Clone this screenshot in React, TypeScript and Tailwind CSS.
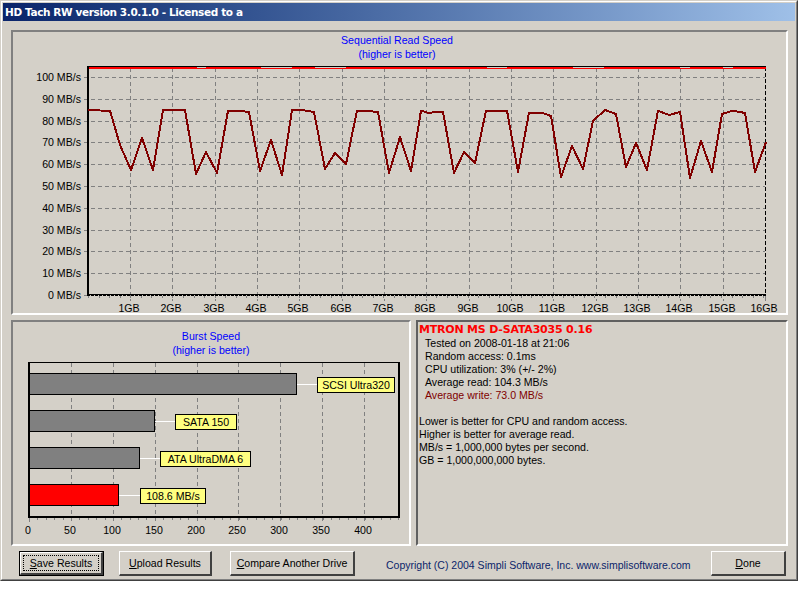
import React from 'react';

const readLine = [
  [88, 110], [100, 110.5], [110, 110.7], [120, 145], [131, 170], [142, 138], [153, 170], [163, 110], [185, 110],
  [196, 174], [206, 152], [217, 173], [228, 110.7], [238, 110.7], [249, 112], [260, 171], [271, 140], [282, 175],
  [292, 110], [302, 110], [314, 112], [325, 169], [335, 153], [346, 164], [357, 110.7], [368, 111], [378, 112],
  [389, 173], [400, 137], [411, 171], [421, 110.7], [428, 112.7], [443, 112], [454, 173], [464, 152], [475, 163],
  [486, 110.7], [507, 110.7], [518, 172], [529, 112.7], [542, 112.7], [551, 116], [561, 177], [572, 146], [583, 169],
  [593, 121], [605, 110], [616, 114], [626, 167], [636, 143], [647, 170], [658, 110.7], [669, 115], [680, 112],
  [690, 178], [701, 141], [712, 172], [722, 114], [733, 110.7], [745, 113], [755, 172], [766, 142],
];

const thickRuns = [
  [88, 197], [206, 261], [292, 315], [346, 487], [507, 573], [604, 680], [690, 723], [733, 766],
];

const mbLabels = [100, 90, 80, 70, 60, 50, 40, 30, 20, 10, 0];
const mbY = [77, 99, 121, 142, 164, 186, 208, 230, 251, 273, 295];
const gbX = [130, 172, 215, 257, 299, 342, 384, 426, 469, 511, 553, 596, 638, 680, 723, 765];

const burstTicks = [0, 50, 100, 150, 200, 250, 300, 350, 400];
const burstX = [29, 71, 113, 155, 197, 238, 280, 322, 364];

const bars = [
  { y: 373, end: 297, fill: '#808080', label: 'SCSI Ultra320', lx: 317, lw: 78 },
  { y: 410, end: 155, fill: '#808080', label: 'SATA 150', lx: 175, lw: 62 },
  { y: 447, end: 140, fill: '#808080', label: 'ATA UltraDMA 6', lx: 160, lw: 91 },
  { y: 484, end: 119, fill: '#ff0000', label: '108.6 MB/s', lx: 140, lw: 66 },
];

const sans = "font-['Liberation_Sans',Arial,sans-serif]";

function SequentialChart() {
  const minor = [];
  for (let x = 88; x < 766; x += 10.55) minor.push(Math.round(x) + 0.5);
  return (
    <svg width={773} height={252} viewBox="13 61 773 252" className="block">
      {mbY.slice(0, 10).map((y) => (
        <line key={y} x1={84} x2={765} y1={y + 0.5} y2={y + 0.5} stroke="#808080" strokeDasharray="4 3" shapeRendering="crispEdges" />
      ))}
      {gbX.slice(0, 15).map((x) => (
        <line key={x} x1={x + 0.5} x2={x + 0.5} y1={68} y2={301} stroke="#808080" strokeDasharray="4 3" shapeRendering="crispEdges" />
      ))}
      {minor.map((x) => (
        <line key={x} x1={x} x2={x} y1={296} y2={298} stroke="#808080" shapeRendering="crispEdges" />
      ))}
      <line x1={84} x2={88} y1={295.5} y2={295.5} stroke="#808080" shapeRendering="crispEdges" />
      <line x1={765.5} x2={765.5} y1={296} y2={301} stroke="#808080" shapeRendering="crispEdges" />

      <line x1={87} x2={766} y1={66.5} y2={66.5} stroke="#000" shapeRendering="crispEdges" />
      <rect x={87} y={66} width={2} height={230} fill="#000" shapeRendering="crispEdges" />
      <line x1={87} x2={766} y1={294.5} y2={294.5} stroke="#000" shapeRendering="crispEdges" />
      <line x1={87} x2={766} y1={295.5} y2={295.5} stroke="#000" strokeDasharray="3 1" shapeRendering="crispEdges" />
      <line x1={765.5} x2={765.5} y1={67} y2={295} stroke="#000" strokeDasharray="4 2" shapeRendering="crispEdges" />

      <rect x={89} y={68} width={677} height={1} fill="#ff0000" shapeRendering="crispEdges" />
      {thickRuns.map(([a, b]) => (
        <rect key={a} x={Math.max(a, 89)} y={67} width={b - Math.max(a, 89)} height={1} fill="#ff0000" shapeRendering="crispEdges" />
      ))}
      <polyline
        points={readLine.map((p) => p.join(',')).join(' ')}
        fill="none"
        stroke="#800000"
        strokeWidth={2}
        strokeLinejoin="round"
        shapeRendering="crispEdges"
      />

      {mbLabels.map((v, i) => (
        <text key={v} x={81} y={mbY[i] + 4} textAnchor="end" className={`${sans} text-[10.6px] fill-black`}>
          {v} MB/s
        </text>
      ))}
      {gbX.map((x, i) => (
        <text key={x} x={x - 1} y={312} textAnchor="middle" className={`${sans} text-[10.6px] fill-black`}>
          {i + 1}GB
        </text>
      ))}
    </svg>
  );
}

function BurstChart() {
  const minor = [];
  for (let x = 29; x < 399; x += 8.39) minor.push(Math.round(x) + 0.5);
  return (
    <svg width={396} height={183} viewBox="13 361 396 183" className="block">
      {burstX.slice(1).map((x) => (
        <line key={x} x1={x + 0.5} x2={x + 0.5} y1={363} y2={522} stroke="#808080" strokeDasharray="4 3" shapeRendering="crispEdges" />
      ))}
      {minor.map((x) => (
        <line key={x} x1={x} x2={x} y1={518} y2={520} stroke="#808080" shapeRendering="crispEdges" />
      ))}
      <line x1={29.5} x2={29.5} y1={518} y2={522} stroke="#808080" shapeRendering="crispEdges" />

      <rect x={28} y={362} width={372} height={1} fill="#000" shapeRendering="crispEdges" />
      <rect x={28} y={362} width={2} height={156} fill="#000" shapeRendering="crispEdges" />
      <rect x={398} y={362} width={2} height={156} fill="#000" shapeRendering="crispEdges" />
      <rect x={28} y={516} width={372} height={2} fill="#000" shapeRendering="crispEdges" />

      {bars.map((b) => (
        <g key={b.label}>
          <line x1={b.end} x2={b.lx} y1={b.y + 11.5} y2={b.y + 11.5} stroke="#fff" shapeRendering="crispEdges" />
          <rect x={29.5} y={b.y + 0.5} width={b.end - 30} height={21} fill={b.fill} stroke="#000" shapeRendering="crispEdges" />
          <rect x={b.lx + 0.5} y={b.y + 4.5} width={b.lw - 1} height={15} fill="#ffff80" stroke="#000" shapeRendering="crispEdges" />
          <text x={b.lx + b.lw / 2} y={b.y + 16} textAnchor="middle" className={`${sans} text-[10.6px] fill-black`}>
            {b.label}
          </text>
        </g>
      ))}

      {burstTicks.map((v, i) => (
        <text key={v} x={burstX[i] - 1} y={534} textAnchor="middle" className={`${sans} text-[10.6px] fill-black`}>
          {v}
        </text>
      ))}
    </svg>
  );
}

function Button({ children, className, focused }: { children: React.ReactNode; className: string; focused?: boolean }) {
  if (focused) {
    return (
      <div className={`${className} h-[25px] border border-black`}>
        <div className="h-full border-t border-l border-t-white border-l-white border-r-2 border-b-2 border-r-[#404040] border-b-[#404040] p-[2px]">
          <div className="h-full pt-[2px] flex items-center justify-center border border-dotted border-black">{children}</div>
        </div>
      </div>
    );
  }
  return (
    <div className={`${className} h-[25px] pt-[2px] flex items-center justify-center border-t border-l border-t-white border-l-white border-r-2 border-b-2 border-r-[#404040] border-b-[#404040]`}>
      {children}
    </div>
  );
}

export default function App() {
  return (
    <div className={`w-[800px] h-[600px] bg-white overflow-hidden text-[10.6px] text-black ${sans}`}>
      <div className="w-[798px] h-[581px] bg-[#d4d0c8] border border-t-[#d4d0c8] border-l-[#d4d0c8] border-r-[#404040] border-b-[#404040]">
        <div className="h-full border border-t-white border-l-white border-r-[#808080] border-b-[#808080] px-px pt-px">
          <div className="h-[18px] pl-[2px] flex items-center bg-gradient-to-r from-[#0a246a] to-[#9fc0e8] text-white font-['DejaVu_Sans',sans-serif] font-bold text-[10.5px] tracking-[-0.38px] leading-none">
            HD Tach RW version 3.0.1.0 - Licensed to a
          </div>

          <div className="mt-[9px] ml-[8px] w-[777px] h-[285px] border-2 border-t-[#808080] border-l-[#808080] border-r-white border-b-white">
            <div className="pt-px pr-[5px] text-center text-[#0000ff] leading-[14px]">
              <div>Sequential Read Speed</div>
              <div>(higher is better)</div>
            </div>
            <SequentialChart />
          </div>

          <div className="mt-[5px] ml-[8px] flex gap-[5px] h-[226px]">
            <div className="w-[400px] border-2 border-t-[#808080] border-l-[#808080] border-r-white border-b-white">
              <div className="pt-[7px] text-center text-[#0000ff] leading-[14px]">
                <div>Burst Speed</div>
                <div>(higher is better)</div>
              </div>
              <div className="h-[4px]" />
              <BurstChart />
            </div>
            <div className="w-[372px] pt-px border-2 border-t-[#606060] border-l-[#606060] border-r-white border-b-white pl-px leading-[13px]">
              <div className="h-[14px] font-['DejaVu_Sans',sans-serif] font-bold text-[#ff0000] text-[11px] tracking-[-0.2px] leading-[14px]">
                MTRON MS D-SATA3035 0.16
              </div>
              <div className="pl-[6px]">
                <div>Tested on 2008-01-18 at 21:06</div>
                <div>Random access: 0.1ms</div>
                <div>CPU utilization: 3% (+/- 2%)</div>
                <div>Average read: 104.3 MB/s</div>
                <div className="text-[#800000]">Average write: 73.0 MB/s</div>
              </div>
              <div className="mt-[13px]">
                <div>Lower is better for CPU and random access.</div>
                <div>Higher is better for average read.</div>
                <div>MB/s = 1,000,000 bytes per second.</div>
                <div>GB = 1,000,000,000 bytes.</div>
              </div>
            </div>
          </div>

          <div className="mt-[5px] flex items-start">
            <Button focused className="ml-[16px] w-[85px]"><span><u>S</u>ave Results</span></Button>
            <Button className="ml-[15px] w-[93px]"><span><u>U</u>pload Results</span></Button>
            <Button className="ml-[18px] w-[125px]"><span><u>C</u>ompare Another Drive</span></Button>
            <div className="ml-[31px] mt-[6px] w-[325px] whitespace-nowrap text-[#0a246a] text-[10.5px] leading-[16px]">
              Copyright (C) 2004 Simpli Software, Inc. www.simplisoftware.com
            </div>
            <Button className="w-[75px]"><span><u>D</u>one</span></Button>
          </div>
        </div>
      </div>
    </div>
  );
}
